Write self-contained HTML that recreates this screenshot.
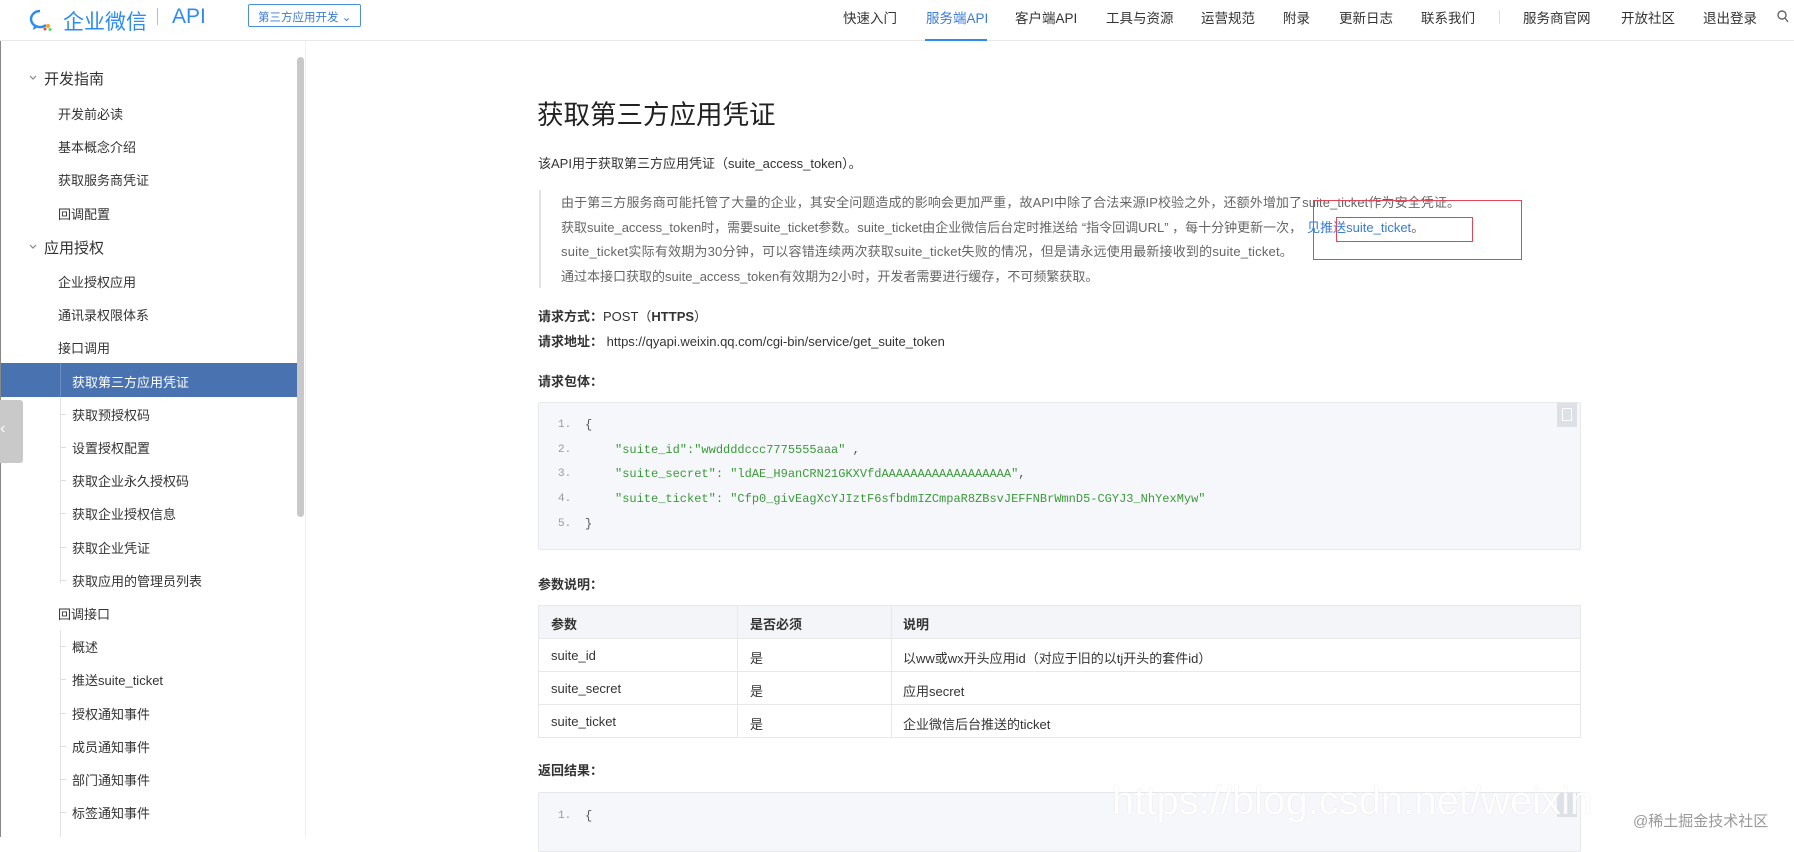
<!DOCTYPE html>
<html><head><meta charset="utf-8"><style>
*{margin:0;padding:0;box-sizing:border-box}
body{width:1794px;height:837px;overflow:hidden;background:#fff;font-family:"Liberation Sans","Noto Sans CJK SC",sans-serif;color:#333;position:relative}
.a{position:absolute;white-space:nowrap}
.hdr{position:absolute;left:0;top:0;width:1794px;height:41px;border-bottom:1px solid #e8e8e8}
.nav{font-size:13.5px;color:#333;top:7px}
.sb{font-size:13px;color:#333}
.sb1{font-size:15px;color:#333}
.ct{font-size:13px;color:#333}
.bq{font-size:13px;color:#666}
.code{font-family:"Liberation Mono",monospace;font-size:12px;color:#3a9a3a}
.ln{font-family:"Liberation Mono",monospace;font-size:11px;color:#999}
.cb{position:absolute;left:538px;width:1043px;background:#f6f7fa;border:1px solid #e6e8ec;border-radius:2px}
.tk{position:absolute;left:60px;width:6px;height:1px;background:#ddd}
.car{position:absolute;left:29px;width:8px;height:8px}
</style></head><body>
<div class="hdr"></div>
<svg class="a" style="left:28px;top:8px" width="26" height="24" viewBox="0 0 26 24"><path d="M12 3a9 8 0 1 0 6 14" fill="none" stroke="#2d8cf0" stroke-width="2.4"/><path d="M6 17l-1 5 5-3" fill="#2d8cf0"/><circle cx="20" cy="18" r="2" fill="#f5a623"/><circle cx="17" cy="21" r="1.5" fill="#e74c3c"/><circle cx="22" cy="21.5" r="1.5" fill="#4cd964"/></svg>
<div class="a" style="left:63px;top:6px;font-size:21px;color:#2d8cf0">企业微信</div>
<div class="a" style="left:157px;top:8px;width:1px;height:17px;background:#bbb"></div>
<div class="a" style="left:172px;top:5px;font-size:21px;color:#2d8cf0">API</div>
<div class="a" style="left:248px;top:4px;width:113px;height:23px;border:1px solid #4a90e2;border-radius:2px;font-size:11.5px;color:#3a7bd5;padding:4px 0 0 9px">第三方应用开发 ⌄</div>
<div class="a nav" style="left:843px">快速入门</div>
<div class="a nav" style="left:926px;color:#3a7bd5">服务端API</div>
<div class="a" style="left:925px;top:39px;width:62px;height:2px;background:#2d8cf0"></div>
<div class="a nav" style="left:1015px">客户端API</div>
<div class="a nav" style="left:1106px">工具与资源</div>
<div class="a nav" style="left:1201px">运营规范</div>
<div class="a nav" style="left:1283px">附录</div>
<div class="a nav" style="left:1339px">更新日志</div>
<div class="a nav" style="left:1421px">联系我们</div>
<div class="a" style="left:1499px;top:10px;width:1px;height:14px;background:#ddd"></div>
<div class="a nav" style="left:1523px">服务商官网</div>
<div class="a nav" style="left:1621px">开放社区</div>
<div class="a nav" style="left:1703px">退出登录</div>
<svg class="a" style="left:1777px;top:10px" width="12" height="13" viewBox="0 0 12 13"><circle cx="5" cy="5" r="4" fill="none" stroke="#666" stroke-width="1.4"/><path d="M8 8l3 4" stroke="#666" stroke-width="1.4"/></svg>

<div class="a" style="left:0;top:41px;width:1px;height:796px;background:#888"></div>
<div class="a" style="left:305px;top:41px;width:1px;height:796px;background:#f0f0f0"></div>
<div class="a" style="left:297px;top:57px;width:7px;height:460px;background:#c8c8c8;border-radius:4px"></div>
<div class="a" style="left:0;top:400px;width:23px;height:63px;background:#c9c9c9;border-radius:0 3px 3px 0;color:#fff;font-size:16px;padding:20px 0 0 0">‹</div>

<svg class="car" style="top:74px" viewBox="0 0 8 8"><path d="M1 2l3 3 3-3" fill="none" stroke="#888" stroke-width="1.2"/></svg>
<div class="a sb1" style="left:44px;top:68px">开发指南</div>
<div class="a sb" style="left:58px;top:104px">开发前必读</div>
<div class="a sb" style="left:58px;top:137px">基本概念介绍</div>
<div class="a sb" style="left:58px;top:170px">获取服务商凭证</div>
<div class="a sb" style="left:58px;top:204px">回调配置</div>
<svg class="car" style="top:243px" viewBox="0 0 8 8"><path d="M1 2l3 3 3-3" fill="none" stroke="#888" stroke-width="1.2"/></svg>
<div class="a sb1" style="left:44px;top:237px">应用授权</div>
<div class="a sb" style="left:58px;top:272px">企业授权应用</div>
<div class="a sb" style="left:58px;top:305px">通讯录权限体系</div>
<div class="a sb" style="left:58px;top:338px">接口调用</div>
<div class="a" style="left:60px;top:363px;width:1px;height:220px;background:#e2e2e2"></div>
<div class="a" style="left:1px;top:363px;width:296px;height:34px;background:#4872b0"></div>
<div class="a" style="left:60px;top:363px;width:1px;height:34px;background:#6a8fc5"></div>
<div class="a sb" style="left:72px;top:372px;color:#fff">获取第三方应用凭证</div>
<div class="tk" style="top:414px"></div><div class="a sb" style="left:72px;top:405px">获取预授权码</div>
<div class="tk" style="top:447px"></div><div class="a sb" style="left:72px;top:438px">设置授权配置</div>
<div class="tk" style="top:480px"></div><div class="a sb" style="left:72px;top:471px">获取企业永久授权码</div>
<div class="tk" style="top:513px"></div><div class="a sb" style="left:72px;top:504px">获取企业授权信息</div>
<div class="tk" style="top:547px"></div><div class="a sb" style="left:72px;top:538px">获取企业凭证</div>
<div class="tk" style="top:580px"></div><div class="a sb" style="left:72px;top:571px">获取应用的管理员列表</div>
<div class="a sb" style="left:58px;top:604px">回调接口</div>
<div class="a" style="left:60px;top:630px;width:1px;height:207px;background:#e2e2e2"></div>
<div class="tk" style="top:646px"></div><div class="a sb" style="left:72px;top:637px">概述</div>
<div class="tk" style="top:679px"></div><div class="a sb" style="left:72px;top:670px">推送suite_ticket</div>
<div class="tk" style="top:713px"></div><div class="a sb" style="left:72px;top:704px">授权通知事件</div>
<div class="tk" style="top:746px"></div><div class="a sb" style="left:72px;top:737px">成员通知事件</div>
<div class="tk" style="top:779px"></div><div class="a sb" style="left:72px;top:770px">部门通知事件</div>
<div class="tk" style="top:812px"></div><div class="a sb" style="left:72px;top:803px">标签通知事件</div>

<div class="a" style="left:537px;top:93px;font-size:26.5px;color:#222">获取第三方应用凭证</div>
<div class="a ct" style="left:538px;top:153px">该API用于获取第三方应用凭证（suite_access_token）。</div>
<div class="a" style="left:539px;top:190px;width:2px;height:98px;background:#e3e3e3"></div>
<div class="a bq" style="left:561px;top:192px;letter-spacing:0.1px">由于第三方服务商可能托管了大量的企业，其安全问题造成的影响会更加严重，故API中除了合法来源IP校验之外，还额外增加了suite_ticket作为安全凭证。</div>
<div class="a bq" style="left:561px;top:217px">获取suite_access_token时，需要suite_ticket参数。suite_ticket由企业微信后台定时推送给 “指令回调URL” ，每十分钟更新一次，<span style="color:#3a7bd5;padding-left:5px">见推送suite_ticket</span>。</div>
<div class="a bq" style="left:561px;top:241px;letter-spacing:0.2px">suite_ticket实际有效期为30分钟，可以容错连续两次获取suite_ticket失败的情况，但是请永远使用最新接收到的suite_ticket。</div>
<div class="a bq" style="left:561px;top:266px">通过本接口获取的suite_access_token有效期为2小时，开发者需要进行缓存，不可频繁获取。</div>
<div class="a" style="left:1313px;top:200px;width:209px;height:60px;border:1px solid #e04558"></div>
<div class="a" style="left:1336px;top:217px;width:137px;height:25px;border:1px solid #e04558"></div>

<div class="a ct" style="left:538px;top:306px"><b>请求方式：</b>POST（<b>HTTPS</b>）</div>
<div class="a ct" style="left:538px;top:331px"><b>请求地址：</b> https://qyapi.weixin.qq.com/cgi-bin/service/get_suite_token</div>
<div class="a ct" style="left:538px;top:371px"><b>请求包体：</b></div>
<div class="cb" style="top:402px;height:148px"></div>
<div class="a" style="left:1557px;top:403px;width:20px;height:24px;background:#dde0e6"></div>
<div class="a" style="left:1562px;top:408px;width:10px;height:13px;border:1px solid #fff"></div>
<div class="a ln" style="left:558px;top:419px">1.</div><div class="a code" style="left:585px;top:418px;color:#555">{</div>
<div class="a ln" style="left:558px;top:444px">2.</div><div class="a code" style="left:615px;top:443px">"suite_id":"wwddddccc7775555aaa" <span style="color:#555">,</span></div>
<div class="a ln" style="left:558px;top:468px">3.</div><div class="a code" style="left:615px;top:467px">"suite_secret": "ldAE_H9anCRN21GKXVfdAAAAAAAAAAAAAAAAAA"<span style="color:#555">,</span></div>
<div class="a ln" style="left:558px;top:493px">4.</div><div class="a code" style="left:615px;top:492px">"suite_ticket": "Cfp0_givEagXcYJIztF6sfbdmIZCmpaR8ZBsvJEFFNBrWmnD5-CGYJ3_NhYexMyw"</div>
<div class="a ln" style="left:558px;top:518px">5.</div><div class="a code" style="left:585px;top:517px;color:#555">}</div>

<div class="a ct" style="left:538px;top:574px"><b>参数说明：</b></div>
<div class="a" style="left:538px;top:605px;width:1043px;height:133px;border:1px solid #e6e8ec"></div>
<div class="a" style="left:539px;top:606px;width:1041px;height:32px;background:#f3f5f8"></div>
<div class="a" style="left:538px;top:638px;width:1043px;height:1px;background:#e6e8ec"></div>
<div class="a" style="left:538px;top:671px;width:1043px;height:1px;background:#e6e8ec"></div>
<div class="a" style="left:538px;top:704px;width:1043px;height:1px;background:#e6e8ec"></div>
<div class="a" style="left:737px;top:605px;width:1px;height:133px;background:#e6e8ec"></div>
<div class="a" style="left:891px;top:605px;width:1px;height:133px;background:#e6e8ec"></div>
<div class="a ct" style="left:551px;top:614px"><b>参数</b></div><div class="a ct" style="left:750px;top:614px"><b>是否必须</b></div><div class="a ct" style="left:903px;top:614px"><b>说明</b></div>
<div class="a ct" style="left:551px;top:648px">suite_id</div><div class="a ct" style="left:750px;top:648px">是</div><div class="a ct" style="left:903px;top:648px">以ww或wx开头应用id（对应于旧的以tj开头的套件id）</div>
<div class="a ct" style="left:551px;top:681px">suite_secret</div><div class="a ct" style="left:750px;top:681px">是</div><div class="a ct" style="left:903px;top:681px">应用secret</div>
<div class="a ct" style="left:551px;top:714px">suite_ticket</div><div class="a ct" style="left:750px;top:714px">是</div><div class="a ct" style="left:903px;top:714px">企业微信后台推送的ticket</div>

<div class="a ct" style="left:538px;top:760px"><b>返回结果：</b></div>
<div class="cb" style="top:792px;height:60px"></div>
<div class="a" style="left:1557px;top:793px;width:20px;height:24px;background:#dde0e6"></div>
<div class="a ln" style="left:558px;top:810px">1.</div><div class="a code" style="left:585px;top:809px;color:#555">{</div>
<div class="a" style="left:1112px;top:779px;font-size:40px;color:#fff;text-shadow:0 0 1px #ccc;opacity:.9">https://blog.csdn.net/weixin</div>
<div class="a" style="left:1633px;top:810px;font-size:15px;color:#999">@稀土掘金技术社区</div>
</body></html>
